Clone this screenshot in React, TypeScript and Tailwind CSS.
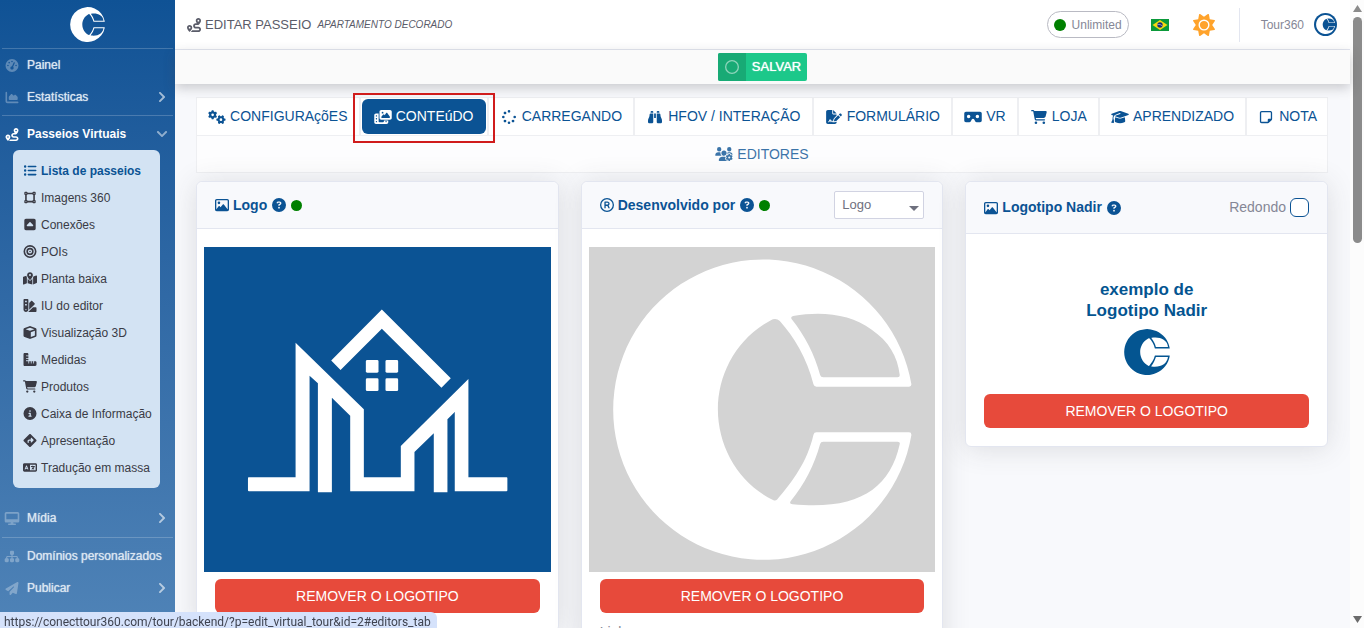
import { useState } from "react";
import type { IconType } from "react-icons";
import { FaChevronDown, FaChevronRight } from "react-icons/fa";
import {
  FaBinoculars,
  FaBullseye,
  FaCartShopping,
  FaChartArea,
  FaCircle,
  FaCircleInfo,
  FaCircleQuestion,
  FaCube,
  FaDesktop,
  FaDiamondTurnRight,
  FaFileSignature,
  FaGaugeHigh,
  FaGears,
  FaGraduationCap,
  FaLanguage,
  FaListUl,
  FaMapLocationDot,
  FaPaperPlane,
  FaPhotoFilm,
  FaRegCircle,
  FaRegImage,
  FaRegNoteSticky,
  FaRegRegistered,
  FaRoute,
  FaRulerCombined,
  FaSitemap,
  FaSpinner,
  FaSquareCaretUp,
  FaSun,
  FaSwatchbook,
  FaUsersGear,
  FaVectorSquare,
  FaVrCardboard,
} from "react-icons/fa6";

interface Item {
  label: string;
  icon: IconType;
}

const tours: Item[] = [
  { label: "Lista de passeios", icon: FaListUl },
  { label: "Imagens 360", icon: FaVectorSquare },
  { label: "Conexões", icon: FaSquareCaretUp },
  { label: "POIs", icon: FaBullseye },
  { label: "Planta baixa", icon: FaMapLocationDot },
  { label: "IU do editor", icon: FaSwatchbook },
  { label: "Visualização 3D", icon: FaCube },
  { label: "Medidas", icon: FaRulerCombined },
  { label: "Produtos", icon: FaCartShopping },
  { label: "Caixa de Informação", icon: FaCircleInfo },
  { label: "Apresentação", icon: FaDiamondTurnRight },
  { label: "Tradução em massa", icon: FaLanguage },
];

const tabs: Item[] = [
  { label: "CONFIGURAçõES", icon: FaGears },
  { label: "CONTEúDO", icon: FaPhotoFilm },
  { label: "CARREGANDO", icon: FaSpinner },
  { label: "HFOV / INTERAÇÃO", icon: FaBinoculars },
  { label: "FORMULÁRIO", icon: FaFileSignature },
  { label: "VR", icon: FaVrCardboard },
  { label: "LOJA", icon: FaCartShopping },
  { label: "APRENDIZADO", icon: FaGraduationCap },
  { label: "NOTA", icon: FaRegNoteSticky },
];

function BrandMark({
  className,
  viewBox = "130 266 896 904",
}: {
  className: string;
  viewBox?: string;
}) {
  return (
    <svg className={className} viewBox={viewBox} fill="currentColor" aria-hidden="true">
      <path
        fillRule="evenodd"
        d="M1025 642 Q1026 650 1018 650 H740 Q733 650 731 643 C712 565 672 500 630 453 Q618 442 602 451 C500 505 444 612 444 718 C444 832 508 942 611 991 Q617 994 622 989 C666 936 712 878 731 794 Q733 787 740 787 H1018 Q1026 787 1025 796 A451 451 0 1 1 1025 642 Z M670 438 Q660 441 667 449 C705 497 734 551 751 615 Q753 622 760 622 H984 Q991 622 990 614 C984 560 958 514 905 478 C845 434 760 422 670 438 Z M664 992 Q656 1002 668 1003 C860 1022 960 960 990 823 Q992 815 984 815 H760 Q753 815 751 822 C734 885 704 942 664 992 Z"
      />
    </svg>
  );
}

function HouseMark() {
  return (
    <svg className="h-full w-full" viewBox="42 231 1041 975" fill="#fff" aria-hidden="true">
      <path d="M424 571 576 418 783 625 755 653 576 476 452 600Z" />
      <path d="M176 922H317V518L522 718V922H633V828L836 627V922H951Q953 922 953 925V961Q953 964 950 964H795V726L773 748V967H732V790L674 846V964H481V737L426 683V967H384V640L359 617V964H177Q174 964 174 961V925Q174 922 176 922Z" />
      <rect x="528" y="570" width="38" height="38" rx="4" />
      <rect x="587" y="570" width="38" height="38" rx="4" />
      <rect x="528" y="625" width="38" height="38" rx="4" />
      <rect x="587" y="625" width="38" height="38" rx="4" />
    </svg>
  );
}

function BrazilFlag() {
  return (
    <svg className="h-3 w-[18px]" viewBox="0 0 18 12" role="img" aria-label="Português">
      <rect width="18" height="12" fill="#0b9a3a" />
      <path d="M9 1 16.5 6 9 11 1.5 6Z" fill="#f8d90f" />
      <circle cx="9" cy="6" r="2.7" fill="#1c2f74" />
      <path d="M6.5 5.4Q9.5 5 11.5 7" stroke="#fff" strokeWidth="0.5" fill="none" />
    </svg>
  );
}

function SideLink({
  item,
  arrow,
  open,
}: {
  item: Item;
  arrow?: boolean;
  open?: boolean;
}) {
  const Icon = item.icon;
  return (
    <a
      href="#"
      className={`flex h-8 items-center pr-[7px] pl-1 text-[12px] ${
        open
          ? "font-bold text-white"
          : "text-[#dbe6f1] [text-shadow:0_0_1px_currentColor]"
      }`}
    >
      <Icon className={`h-[13px] w-4 shrink-0 ${open ? "" : "text-white/30"}`} />
      <span className="ml-[7px] flex-1 whitespace-nowrap">{item.label}</span>
      {arrow &&
        (open ? (
          <FaChevronDown className="size-3 text-white/50" />
        ) : (
          <FaChevronRight className="size-3 text-white/60" />
        ))}
    </a>
  );
}

function Sidebar() {
  return (
    <aside className="w-[175px] shrink-0 bg-linear-to-b from-[#0f5295] to-[#4f83b7]">
      <div className="flex h-12 items-center justify-center text-white">
        <BrandMark className="size-[35px]" />
      </div>
      <nav className="flex flex-col">
        <hr className="mx-[2px] border-white/20" />
        <SideLink item={{ label: "Painel", icon: FaGaugeHigh }} />
        <SideLink item={{ label: "Estatísticas", icon: FaChartArea }} arrow />
        <hr className="mx-[2px] mt-[2px] mb-[2px] border-white/20" />
        <SideLink item={{ label: "Passeios Virtuais", icon: FaRoute }} arrow open />
        <ul className="mr-[15px] ml-[13px] h-[338px] overflow-hidden rounded-md bg-[#d3e3f3] py-[7px] pr-[6px] pl-[10px] text-[12px] text-[#3a3b45]">
          {tours.map(({ label, icon: Icon }, i) => (
            <li key={label}>
              <a
                href="#"
                className={`flex h-[27px] items-center gap-1 overflow-hidden whitespace-nowrap ${
                  i === 0 ? "font-bold text-[#0b5394]" : ""
                }`}
              >
                <Icon className="h-[13px] w-[14px] shrink-0" />
                {label}
              </a>
            </li>
          ))}
        </ul>
        <div className="mt-[14px]">
          <SideLink item={{ label: "Mídia", icon: FaDesktop }} arrow />
        </div>
        <hr className="mx-[2px] mt-[3px] mb-[2px] border-white/20" />
        <SideLink item={{ label: "Domínios personalizados", icon: FaSitemap }} />
        <SideLink item={{ label: "Publicar", icon: FaPaperPlane }} arrow />
      </nav>
    </aside>
  );
}

function Topbar() {
  return (
    <header className="flex h-[50px] shrink-0 items-center border-b border-[#e3e6f0] bg-white pr-[13px] pl-3 text-[#858796]">
      <h1 className="flex items-center gap-1 text-[13px] text-[#5a5c69]">
        <FaRoute className="size-[14px]" />
        EDITAR PASSEIO
      </h1>
      <em className="ml-[6px] text-[10px] text-[#5a5c69]">APARTAMENTO DECORADO</em>
      <div className="ml-auto flex items-center">
        <span className="flex h-[27px] items-center gap-[6px] rounded-full border border-[#b9bac3] px-[6px] text-[12px]">
          <FaCircle className="size-3 text-[#008000]" />
          Unlimited
        </span>
        <button type="button" className="ml-[22px]">
          <BrazilFlag />
        </button>
        <button type="button" aria-label="Tema claro" className="ml-6">
          <FaSun className="size-[22px] text-[#ffa32b]" />
        </button>
        <span className="ml-6 h-[34px] w-px bg-[#e3e6f0]" />
        <a href="#" className="ml-[21px] flex items-center gap-[10px] text-[12px]">
          Tour360
          <span className="flex size-[23px] items-center justify-center rounded-full bg-[#0b5394] text-white">
            <BrandMark className="size-[19px]" />
          </span>
        </a>
      </div>
    </header>
  );
}

function Tabs() {
  const [active, setActive] = useState("CONTEúDO");

  return (
    <div role="tablist" className="flex flex-wrap border border-[#eeeff2] bg-[#fdfdfe] text-[14px] text-[#0b5394]">
      {tabs.map(({ label, icon: Icon }, i) => (
        <div
          key={label}
          className={`relative h-[38px] border-b border-[#eeeff2] bg-white p-px ${
            i === tabs.length - 1 ? "flex-none" : "flex-auto border-r-2"
          }`}
        >
          <button
            type="button"
            role="tab"
            aria-selected={active === label}
            onClick={() => setActive(label)}
            className={`flex h-full w-full items-center justify-center gap-1 rounded-md whitespace-nowrap ${
              active === label ? "bg-[#0b5394] px-[11px] text-white" : "px-[9px]"
            }`}
          >
            <Icon className="h-[14px] w-[18px]" />
            {label}
          </button>
          {label === "CONTEúDO" && (
            <span className="pointer-events-none absolute -inset-x-2 -top-[5px] -bottom-2 z-10 border-2 border-[#d01c1c]" />
          )}
        </div>
      ))}
      <button
        type="button"
        role="tab"
        aria-selected={active === "EDITORES"}
        onClick={() => setActive("EDITORES")}
        className="flex h-9 w-full items-center justify-center gap-1 opacity-80"
      >
        <FaUsersGear className="h-[14px] w-[18px]" />
        EDITORES
      </button>
    </div>
  );
}

function Card({
  title,
  icon: Icon,
  dot,
  tall,
  action,
  children,
}: {
  title: string;
  icon: IconType;
  dot?: boolean;
  tall?: boolean;
  action?: React.ReactNode;
  children: React.ReactNode;
}) {
  return (
    <section className="flex-1 rounded-md border border-[#e3e6f0] bg-white shadow-[0_2px_28px_rgba(58,59,69,0.15)]">
      <div
        className={`flex items-center justify-between rounded-t-md border-b border-[#e3e6f0] bg-[#f8f9fc] px-[18px] ${
          tall ? "h-[52px]" : "h-[47px]"
        }`}
      >
        <h2 className="flex items-center gap-1 text-[14px] font-bold text-[#0b5394]">
          <Icon className="size-[14px]" />
          {title}
          <FaCircleQuestion className="ml-px size-[14px]" />
          {dot && <FaCircle className="ml-px size-[11px] text-[#008000]" />}
        </h2>
        {action}
      </div>
      <div className="flex flex-col px-[7px] py-[18px]">{children}</div>
    </section>
  );
}

function RemoveButton() {
  return (
    <button
      type="button"
      className="mx-[11px] h-[34px] rounded-md bg-[#e74a3b] text-[14px] text-white"
    >
      REMOVER O LOGOTIPO
    </button>
  );
}

export default function App() {
  const [kind, setKind] = useState("Logo");
  const [round, setRound] = useState(false);

  return (
    <div className="flex h-screen overflow-hidden bg-[#f8f9fc] font-['Liberation_Sans',Arial,sans-serif] leading-normal">
      <Sidebar />

      <div className="flex min-w-0 flex-1 flex-col">
        <Topbar />
        <div className="z-10 flex h-[34px] shrink-0 items-center justify-center bg-[#fafafa] shadow-[0_4px_12px_rgba(58,59,69,0.25)]">
          <button
            type="button"
            className="flex h-7 items-center overflow-hidden rounded-xs bg-[#1cc88a] text-[13px] text-white [text-shadow:0_0_1px_currentColor]"
          >
            <span className="flex h-full w-7 items-center justify-center bg-[#18aa75]">
              <FaRegCircle className="size-[14px] opacity-50" />
            </span>
            <span className="px-[6px]">SALVAR</span>
          </button>
        </div>

        <main className="flex min-h-0 flex-1 flex-col overflow-hidden px-[21px] pt-[13px] pr-[22px]">
          <Tabs />

          <div className="mt-2 flex items-start gap-[22px]">
            <Card title="Logo" icon={FaRegImage} dot>
              <div className="mb-[7px] h-[325px] bg-[#0b5394]">
                <HouseMark />
              </div>
              <RemoveButton />
            </Card>

            <Card
              title="Desenvolvido por"
              icon={FaRegRegistered}
              dot
              action={
                <div className="relative">
                  <select
                    aria-label="Tipo"
                    value={kind}
                    onChange={(e) => setKind(e.target.value)}
                    className="block h-7 w-[90px] appearance-none rounded-xs border border-[#d1d3e2] bg-white px-[7px] text-[13px] text-[#6e707e]"
                  >
                    <option>Logo</option>
                    <option>Texto</option>
                  </select>
                  <svg className="pointer-events-none absolute right-[5px] bottom-2 h-[5px] w-[10px]" viewBox="0 0 10 5">
                    <path d="M0 0H10L5 5Z" fill="#6e707e" />
                  </svg>
                </div>
              }
            >
              <div className="mb-[7px] h-[325px] bg-[#d3d3d3] text-white">
                <BrandMark className="h-full w-full" viewBox="57 231 1041 975" />
              </div>
              <RemoveButton />
              <label htmlFor="link" className="mx-[11px] mt-[9px] text-[14px] text-[#858796]">
                Link
              </label>
              <input id="link" type="text" className="mx-[11px] mt-2 h-8 rounded-md border border-[#d1d3e2] px-2" />
            </Card>

            <Card
              title="Logotipo Nadir"
              icon={FaRegImage}
              tall
              action={
                <label className="flex items-center gap-1 text-[14px] text-[#858796]">
                  Redondo
                  <input
                    type="checkbox"
                    checked={round}
                    onChange={(e) => setRound(e.target.checked)}
                    className="size-[19px] appearance-none rounded-md border border-[#0b5394] bg-white checked:bg-[#0b5394]"
                  />
                </label>
              }
            >
              <div className="flex flex-col items-center pt-[27px] pb-[19px] text-[#045591]">
                <p className="text-center text-[17px] leading-[21px] font-bold">
                  exemplo de
                  <br />
                  Logotipo Nadir
                </p>
                <BrandMark className="mt-2 size-[46px]" />
              </div>
              <RemoveButton />
            </Card>
          </div>
        </main>
      </div>

      {/* scroll track */}
      <div className="flex w-[14px] shrink-0 flex-col items-center bg-[#fcfcfc] py-[5px]">
        <svg className="h-[7px] w-[9px]" viewBox="0 0 9 7" fill="#8b8b8b">
          <path d="M4.5 0 9 7H0Z" />
        </svg>
        <div className="mt-[5px] h-[226px] w-[9px] rounded-full bg-[#8b8b8b]" />
        <svg className="mt-auto h-[7px] w-[9px]" viewBox="0 0 9 7" fill="#6b6b6b">
          <path d="M4.5 7 0 0H9Z" />
        </svg>
      </div>

      {/* link address at the foot of the window */}
      <div className="fixed bottom-0 left-0 z-20 h-4 rounded-tr-md bg-[#d5e2fb] pr-[6px] pl-1 font-[Roboto,'Noto_Sans',sans-serif] text-[12px] leading-5 whitespace-nowrap text-[#3f4350]">
        https://conecttour360.com/tour/backend/?p=edit_virtual_tour&amp;id=2#editors_tab
      </div>
    </div>
  );
}
